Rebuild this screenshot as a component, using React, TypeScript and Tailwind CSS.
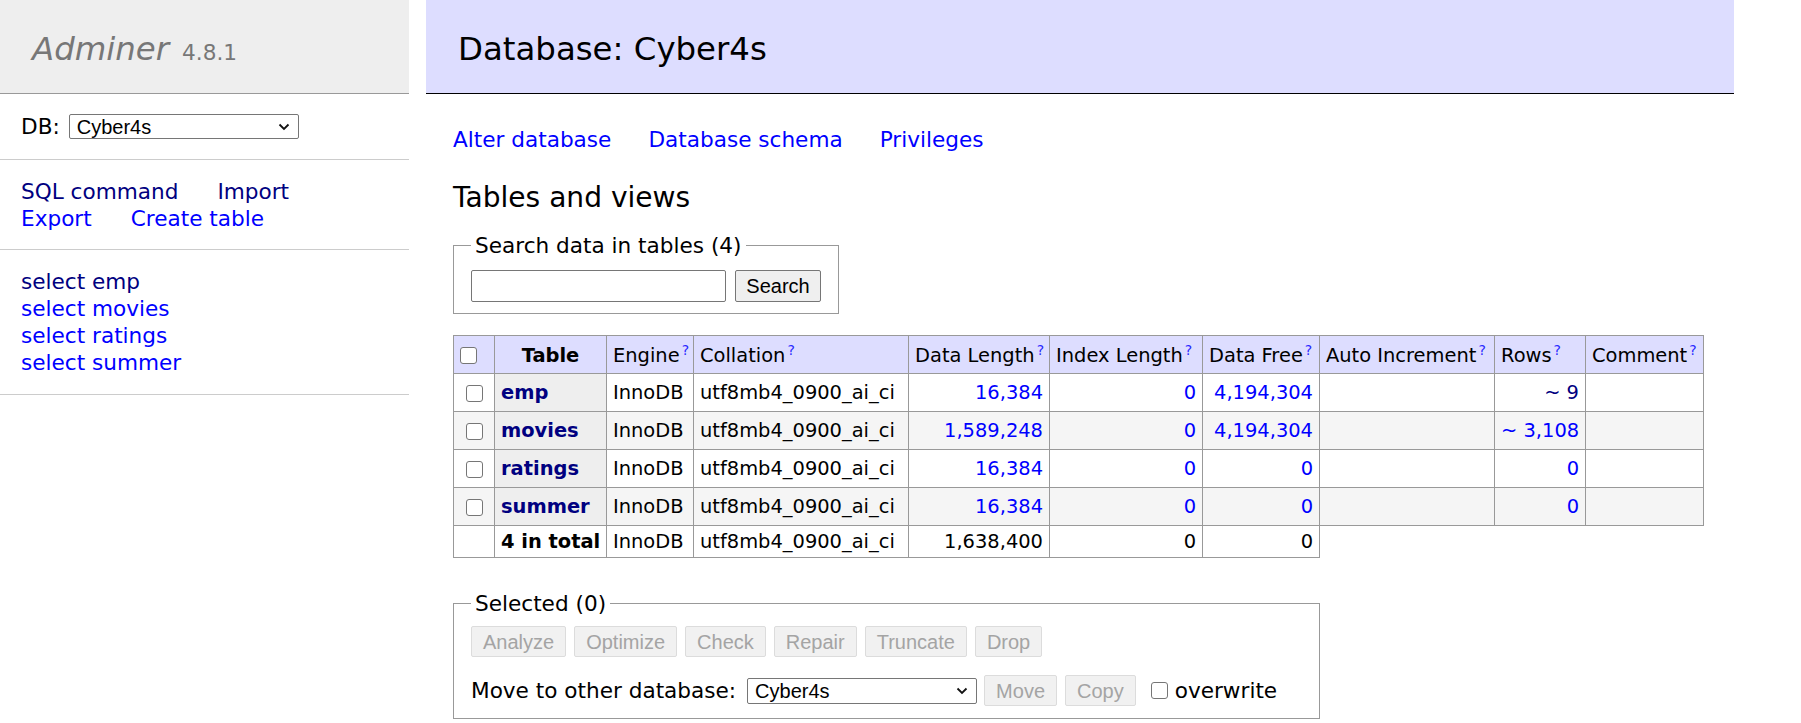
import React from "react";

type Row = {
  name: string;
  dataLength: string;
  indexLength: string;
  dataFree: string;
  rows: string;
  visited?: boolean;
  odd?: boolean;
};

const tables: Row[] = [
  { name: "emp", dataLength: "16,384", indexLength: "0", dataFree: "4,194,304", rows: "~ 9", visited: true },
  { name: "movies", dataLength: "1,589,248", indexLength: "0", dataFree: "4,194,304", rows: "~ 3,108", odd: true },
  { name: "ratings", dataLength: "16,384", indexLength: "0", dataFree: "0", rows: "0" },
  { name: "summer", dataLength: "16,384", indexLength: "0", dataFree: "0", rows: "0", odd: true },
];

function Check() {
  return <span className="inline-block h-[17px] w-[17px] rounded-[3px] border border-[#767676] bg-white align-middle" />;
}

function Chevron() {
  return (
    <svg width="12" height="8" viewBox="0 0 12 8" className="shrink-0">
      <polyline points="1.5,1.5 6,6 10.5,1.5" fill="none" stroke="#111" strokeWidth="1.8" />
    </svg>
  );
}

function Select({ className }: { className: string }) {
  return (
    <div
      className={`flex items-center justify-between rounded-[2px] border border-[#767676] bg-white pl-[7px] pr-[8px] font-['Liberation_Sans',Arial,sans-serif] text-[20px] leading-none text-black ${className}`}
    >
      <span>Cyber4s</span>
      <Chevron />
    </div>
  );
}

function Help() {
  return <sup className="relative -top-[7px] ml-[2px] align-baseline text-[14px] leading-none text-[#2a2aff]">?</sup>;
}

function DisabledButton({ label }: { label: string }) {
  return (
    <button
      type="button"
      disabled
      className="h-[31px] rounded-[2px] border border-[#dcdcdc] bg-[#f1f1f1] px-[11px] font-['Liberation_Sans',Arial,sans-serif] text-[20px] leading-none text-[#a4a4a4]"
    >
      {label}
    </button>
  );
}

export default function App() {
  const head = "border-b border-r border-[#999] bg-[#ddf] px-[6px] text-left font-normal";
  const cell = "border-b border-r border-[#999] px-[6px]";

  return (
    <div className="flex min-h-screen bg-white font-['DejaVu_Sans',Verdana,sans-serif] text-[21.6px] leading-[27px] text-black">
      {/* sidebar */}
      <aside className="w-[409px] shrink-0">
        <div className="h-[94px] border-b border-[#999] bg-[#eee] pl-[32px] pt-[29px] leading-[40px] text-[#777]">
          <span className="text-[32.4px] italic">Adminer</span>
          <span className="ml-[13px] text-[21.6px]">4.8.1</span>
        </div>

        <div className="flex h-[66px] items-center gap-[9px] border-b border-[#ccc] px-[21px]">
          <span>DB:</span>
          <Select className="h-[25px] w-[230px]" />
        </div>

        <div className="border-b border-[#ccc] px-[21px] pb-[17px] pt-[18px]">
          <div className="flex gap-[39px] text-[#000080]">
            <a>SQL command</a>
            <a>Import</a>
          </div>
          <div className="flex gap-[39px] text-[#00f]">
            <a>Export</a>
            <a>Create table</a>
          </div>
        </div>

        <div className="flex flex-col border-b border-[#ccc] px-[21px] pb-[18px] pt-[18px]">
          <a className="text-[#000080]">select emp</a>
          <a className="text-[#00f]">select movies</a>
          <a className="text-[#00f]">select ratings</a>
          <a className="text-[#00f]">select summer</a>
        </div>
      </aside>

      {/* content */}
      <main className="ml-[17px] mr-[67px] flex-1">
        <h2 className="h-[94px] border-b border-black bg-[#ddf] pl-[32px] pt-[29px] text-[32.4px] font-normal leading-[40px]">
          Database: Cyber4s
        </h2>

        <div className="pl-[27px]">
          <p className="mt-[32px] flex gap-[37px] text-[#00f]">
            <a>Alter database</a>
            <a>Database schema</a>
            <a>Privileges</a>
          </p>

          <h3 className="mt-[27px] text-[28.08px] font-normal leading-[35px]">Tables and views</h3>

          <fieldset className="mt-[17px] w-fit border border-[#999] px-[17px] pb-[11px] pt-[11px]">
            <legend className="px-[4px] leading-[27px]">Search data in tables (4)</legend>
            <div className="flex gap-[9px]">
              <input className="h-[32px] w-[255px] rounded-[2px] border border-[#767676] bg-white" />
              <button
                type="button"
                className="h-[32px] w-[86px] rounded-[2px] border border-[#767676] bg-[#efefef] font-['Liberation_Sans',Arial,sans-serif] text-[20px] leading-none text-black"
              >
                Search
              </button>
            </div>
          </fieldset>

          <table className="mt-[21px] w-[1251px] table-fixed border-separate border-spacing-0 whitespace-nowrap border-l border-t border-[#999] text-[19.44px] leading-[24px]">
            <colgroup>
              <col className="w-[41px]" />
              <col className="w-[112px]" />
              <col className="w-[87px]" />
              <col className="w-[215px]" />
              <col className="w-[141px]" />
              <col className="w-[153px]" />
              <col className="w-[117px]" />
              <col className="w-[175px]" />
              <col className="w-[91px]" />
              <col className="w-[118px]" />
            </colgroup>
            <thead>
              <tr className="h-[38px]">
                <td className={`${head} text-center`}>
                  <Check />
                </td>
                <th className="border-b border-r border-[#999] bg-[#ddf] px-[6px] pt-[2px] text-center font-bold">Table</th>
                <td className={`${head} pt-[2px]`}>
                  Engine<Help />
                </td>
                <td className={`${head} pt-[2px]`}>
                  Collation<Help />
                </td>
                <td className={`${head} pt-[2px]`}>
                  Data Length<Help />
                </td>
                <td className={`${head} pt-[2px]`}>
                  Index Length<Help />
                </td>
                <td className={`${head} pt-[2px]`}>
                  Data Free<Help />
                </td>
                <td className={`${head} pt-[2px]`}>
                  Auto Increment<Help />
                </td>
                <td className={`${head} pt-[2px]`}>
                  Rows<Help />
                </td>
                <td className={`${head} pt-[2px]`}>
                  Comment<Help />
                </td>
              </tr>
            </thead>
            <tbody>
              {tables.map((t) => {
                const bg = t.odd ? "bg-[#f5f5f5]" : "bg-white";
                return (
                  <tr key={t.name} className="h-[38px]">
                    <td className={`${cell} ${bg} text-center`}>
                      <Check />
                    </td>
                    <th className={`${cell} bg-[#eee] text-left font-bold text-[#000080]`}>{t.name}</th>
                    <td className={`${cell} ${bg}`}>InnoDB</td>
                    <td className={`${cell} ${bg}`}>utf8mb4_0900_ai_ci</td>
                    <td className={`${cell} ${bg} text-right text-[#00f]`}>{t.dataLength}</td>
                    <td className={`${cell} ${bg} text-right text-[#00f]`}>{t.indexLength}</td>
                    <td className={`${cell} ${bg} text-right text-[#00f]`}>{t.dataFree}</td>
                    <td className={`${cell} ${bg}`} />
                    <td className={`${cell} ${bg} text-right ${t.visited ? "text-[#000080]" : "text-[#00f]"}`}>{t.rows}</td>
                    <td className={`${cell} ${bg}`} />
                  </tr>
                );
              })}
              <tr className="h-[32px]">
                <td className={cell} />
                <th className={`${cell} text-left font-bold`}>4 in total</th>
                <td className={cell}>InnoDB</td>
                <td className={cell}>utf8mb4_0900_ai_ci</td>
                <td className={`${cell} text-right`}>1,638,400</td>
                <td className={`${cell} text-right`}>0</td>
                <td className={`${cell} text-right`}>0</td>
              </tr>
            </tbody>
          </table>

          <fieldset className="mt-[32px] w-[867px] border border-[#999] px-[17px] pb-[12px] pt-[9px]">
            <legend className="px-[4px] leading-[27px]">Selected (0)</legend>
            <div className="flex gap-[8px]">
              <DisabledButton label="Analyze" />
              <DisabledButton label="Optimize" />
              <DisabledButton label="Check" />
              <DisabledButton label="Repair" />
              <DisabledButton label="Truncate" />
              <DisabledButton label="Drop" />
            </div>
            <div className="mt-[18px] flex h-[31px] items-center">
              <span>Move to other database:</span>
              <Select className="ml-[11px] h-[26px] w-[230px]" />
              <div className="ml-[7px] flex gap-[8px]">
                <DisabledButton label="Move" />
                <DisabledButton label="Copy" />
              </div>
              <label className="ml-[15px] flex items-center gap-[7px]">
                <Check />
                <span>overwrite</span>
              </label>
            </div>
          </fieldset>
        </div>
      </main>
    </div>
  );
}
